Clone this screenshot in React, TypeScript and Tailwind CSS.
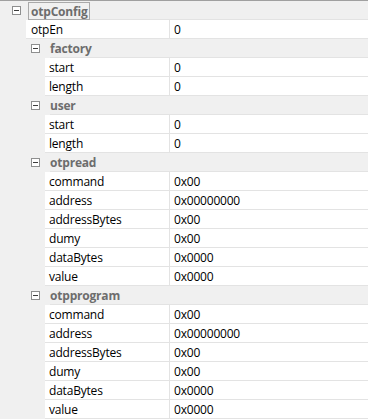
import React from "react";

type Row =
  | { kind: "group"; level: number; label: string; focus?: boolean }
  | { kind: "leaf"; level: number; label: string; value: string };

const rows: Row[] = [
  { kind: "group", level: 0, label: "otpConfig", focus: true },
  { kind: "leaf", level: 1, label: "otpEn", value: "0" },
  { kind: "group", level: 1, label: "factory" },
  { kind: "leaf", level: 2, label: "start", value: "0" },
  { kind: "leaf", level: 2, label: "length", value: "0" },
  { kind: "group", level: 1, label: "user" },
  { kind: "leaf", level: 2, label: "start", value: "0" },
  { kind: "leaf", level: 2, label: "length", value: "0" },
  { kind: "group", level: 1, label: "otpread" },
  { kind: "leaf", level: 2, label: "command", value: "0x00" },
  { kind: "leaf", level: 2, label: "address", value: "0x00000000" },
  { kind: "leaf", level: 2, label: "addressBytes", value: "0x00" },
  { kind: "leaf", level: 2, label: "dumy", value: "0x00" },
  { kind: "leaf", level: 2, label: "dataBytes", value: "0x0000" },
  { kind: "leaf", level: 2, label: "value", value: "0x0000" },
  { kind: "group", level: 1, label: "otpprogram" },
  { kind: "leaf", level: 2, label: "command", value: "0x00" },
  { kind: "leaf", level: 2, label: "address", value: "0x00000000" },
  { kind: "leaf", level: 2, label: "addressBytes", value: "0x00" },
  { kind: "leaf", level: 2, label: "dumy", value: "0x00" },
  { kind: "leaf", level: 2, label: "dataBytes", value: "0x0000" },
  { kind: "leaf", level: 2, label: "value", value: "0x0000" },
];

function MinusBox() {
  return (
    <svg width="9" height="9" viewBox="0 0 9 9" className="block">
      <rect x="0.5" y="0.5" width="8" height="8" fill="#ffffff" stroke="#8e8f8f" />
      <line x1="2" y1="4.5" x2="7" y2="4.5" stroke="#3c3c3c" />
    </svg>
  );
}

function GroupRow({ r }: { r: Extract<Row, { kind: "group" }> }) {
  return (
    <div className="flex h-[19px] bg-[#f0f0f0]">
      <div className={r.level === 0 ? "w-[12px] shrink-0" : "w-[31px] shrink-0"} />
      <div className="w-[19px] shrink-0 flex items-center h-[19px] pb-[1px]">
        <MinusBox />
      </div>
      <div className="flex-1 flex h-[19px] border-b border-[#e3e3e3]">
        {r.focus ? (
          <div className="ml-[-3px] mt-[1px] h-[18px] border border-[#a9a9a9] px-[2px] pt-[1px] leading-[15px] font-bold text-[#6d6d6d]">
            {r.label}
          </div>
        ) : (
          <div className="pt-[1px] leading-[17px] font-bold text-[#6d6d6d]">{r.label}</div>
        )}
      </div>
    </div>
  );
}

function LeafRow({ r }: { r: Extract<Row, { kind: "leaf" }> }) {
  return (
    <div className="flex h-[19px]">
      <div className="w-[169px] shrink-0 flex">
        <div className={r.level === 1 ? "w-[26px] shrink-0 bg-[#f0f0f0]" : "w-[45px] shrink-0 bg-[#f0f0f0]"} />
        <div
          className={
            r.level === 1
              ? "flex-1 bg-white border-b border-[#e3e3e3] pl-[5px] pt-[1px] leading-[17px] text-black"
              : "flex-1 bg-white border-b border-[#e3e3e3] pl-[4px] pt-[1px] leading-[17px] text-black"
          }
        >
          {r.label}
        </div>
      </div>
      <div className="flex-1 bg-white border-b border-l border-[#e3e3e3] pl-[4px] pt-[1px] leading-[17px] text-black">
        {r.value}
      </div>
    </div>
  );
}

export default function App() {
  return (
    <div
      className="w-[368px] h-[419px] overflow-hidden bg-[#f0f0f0] border-t border-[#a0a0a0] text-[12px] tracking-[-0.2px]"
      style={{ fontFamily: '"Open Sans", "Noto Sans", sans-serif' }}
    >
      {rows.map((r, i) =>
        r.kind === "group" ? <GroupRow key={i} r={r} /> : <LeafRow key={i} r={r} />
      )}
    </div>
  );
}
